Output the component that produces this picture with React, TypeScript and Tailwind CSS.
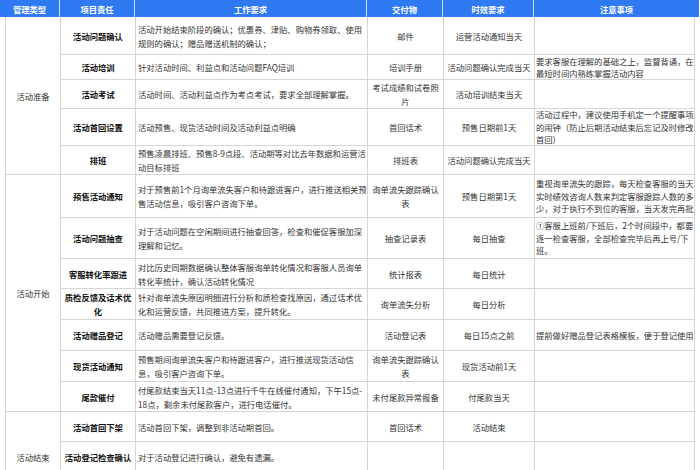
import React from "react";

type Row = {
  role: string[];
  work: string[];
  deliver: string[];
  time: string;
  note: string[];
};

const prep: Row[] = [
  {
    role: ["活动问题确认"],
    work: ["活动开始结束阶段的确认；优惠券、津贴、购物券领取、使用", "规则的确认；赠品赠送机制的确认；"],
    deliver: ["邮件"],
    time: "运营活动通知当天",
    note: [],
  },
  {
    role: ["活动培训"],
    work: ["针对活动时间、利益点和活动问题FAQ培训"],
    deliver: ["培训手册"],
    time: "活动问题确认完成当天",
    note: ["要求客服在理解的基础之上，监督背诵，在", "最短时间内熟练掌握活动内容"],
  },
  {
    role: ["活动考试"],
    work: ["活动时间、活动利益点作为考点考试，要求全部理解掌握。"],
    deliver: ["考试成绩和试卷照", "片"],
    time: "活动培训结束当天",
    note: [],
  },
  {
    role: ["活动首回设置"],
    work: ["活动预售、现货活动时间及活动利益点明确"],
    deliver: ["首回话术"],
    time: "预售日期前1天",
    note: ["活动过程中，建议使用手机定一个提醒事项", "的闹钟（防止后期活动结束后忘记及时修改", "首回）"],
  },
  {
    role: ["排班"],
    work: ["预售凌晨排班、预售8-9点段、活动期等对比去年数据和运营活", "动目标排班"],
    deliver: ["排班表"],
    time: "活动问题确认完成当天",
    note: [],
  },
];

const start: Row[] = [
  {
    role: ["预售活动通知"],
    work: ["对于预售前1个月询单流失客户和待跟进客户，进行推送相关预", "售活动信息，吸引客户咨询下单。"],
    deliver: ["询单流失跟踪确认", "表"],
    time: "预售日期第1天",
    note: ["重视询单流失的跟踪，每天检查客服的当天", "实时绩效咨询人数来判定客服跟踪人数的多", "少，对于执行不到位的客服，当天发完再批"],
  },
  {
    role: ["活动问题抽查"],
    work: ["对于活动问题在空闲期间进行抽查回答，检查和催促客服加深", "理解和记忆。"],
    deliver: ["抽查记录表"],
    time: "每日抽查",
    note: ["①客服上班前/下班后，2个时间段中，都要", "逐一检查客服，全部检查完毕后再上号/下", "班。"],
  },
  {
    role: ["客服转化率跟进"],
    work: ["对比历史同期数据确认整体客服询单转化情况和客服人员询单", "转化率统计，确认活动转化情况"],
    deliver: ["统计报表"],
    time: "每日统计",
    note: [],
  },
  {
    role: ["质检反馈及话术优", "化"],
    work: ["针对询单流失原因明细进行分析和质检查找原因，通过话术优", "化和运营反馈，共同推进方案，提升转化。"],
    deliver: ["询单流失分析"],
    time: "每日分析",
    note: [],
  },
  {
    role: ["活动赠品登记"],
    work: ["活动赠品需要登记反馈。"],
    deliver: ["活动登记表"],
    time: "每日15点之前",
    note: ["提前做好赠品登记表格模板，便于登记使用"],
  },
  {
    role: ["现货活动通知"],
    work: ["预售期间询单流失客户和待跟进客户，进行推送现货活动信", "息，吸引客户咨询下单。"],
    deliver: ["询单流失跟踪确认", "表"],
    time: "现货活动前1天",
    note: [],
  },
  {
    role: ["尾款催付"],
    work: ["付尾款结束当天11点-13点进行千牛在线催付通知，下午15点-", "18点，剩余未付尾款客户，进行电话催付。"],
    deliver: ["未付尾款异常报备"],
    time: "付尾款当天",
    note: [],
  },
];

const end: Row[] = [
  {
    role: ["活动首回下架"],
    work: ["活动首回下架，调整到非活动期首回。"],
    deliver: ["首回话术"],
    time: "活动结束",
    note: [],
  },
  {
    role: ["活动登记检查确认"],
    work: ["对于活动登记进行确认，避免有遗漏。"],
    deliver: [],
    time: "",
    note: [],
  },
  {
    role: [],
    work: [],
    deliver: [],
    time: "",
    note: [],
  },
];

const cell = "border-r border-b border-[#d6d6d6] flex items-center overflow-hidden";

function Lines({ lines }: { lines: string[] }) {
  return (
    <div className="whitespace-nowrap">
      {lines.map((l, i) => (
        <div key={i}>{l}</div>
      ))}
    </div>
  );
}

function RowCells({ r }: { r: Row }) {
  return (
    <>
      <div className={`${cell} justify-center text-center font-bold text-[#111]`}>
        <Lines lines={r.role} />
      </div>
      <div className={`${cell} justify-start pl-[2px]`}>
        <Lines lines={r.work} />
      </div>
      <div className={`${cell} justify-center text-center`}>
        <Lines lines={r.deliver} />
      </div>
      <div className={`${cell} justify-center text-center`}>
        <span className="whitespace-nowrap">{r.time}</span>
      </div>
      <div className={`${cell} justify-start pl-[1px] leading-[12.5px]`}>
        <Lines lines={r.note} />
      </div>
    </>
  );
}

function Group({ label, rows, span }: { label: string; rows: Row[]; span: string }) {
  return (
    <>
      <div className={`${cell} ${span} justify-center`}>{label}</div>
      {rows.map((r, i) => (
        <RowCells key={i} r={r} />
      ))}
    </>
  );
}

export default function App() {
  return (
    <div
      className="w-[700px] h-[470px] overflow-hidden bg-white text-[8.3px] leading-[14px] text-[#333]"
      style={{ fontFamily: '"Noto Sans CJK SC", "Noto Sans", sans-serif' }}
    >
      <div className="grid h-[17px] w-[699px] grid-cols-[60px_75px_232px_76px_91px_165px] bg-[#2f7af3] font-bold text-white">
        {["管理类型", "项目责任", "工作要求", "交付物", "时效要求", "注意事项"].map((h, i) => (
          <div
            key={i}
            className={`flex items-center justify-center ${i < 5 ? "border-r border-[#cfe0fd]" : ""}`}
          >
            {h}
          </div>
        ))}
      </div>
      <div className="ml-[5px] grid w-[690px] grid-cols-[55px_75px_232px_76px_91px_160px] grid-rows-[38px_25px_29px_37px_29px_43px_41px_30px_31px_31px_31px_30px_30px_30px_30px] border-l border-[#d6d6d6]">
        <Group label="活动准备" rows={prep} span="row-span-5" />
        <Group label="活动开始" rows={start} span="row-span-7" />
        <Group label="活动结束" rows={end} span="row-span-3" />
      </div>
    </div>
  );
}
